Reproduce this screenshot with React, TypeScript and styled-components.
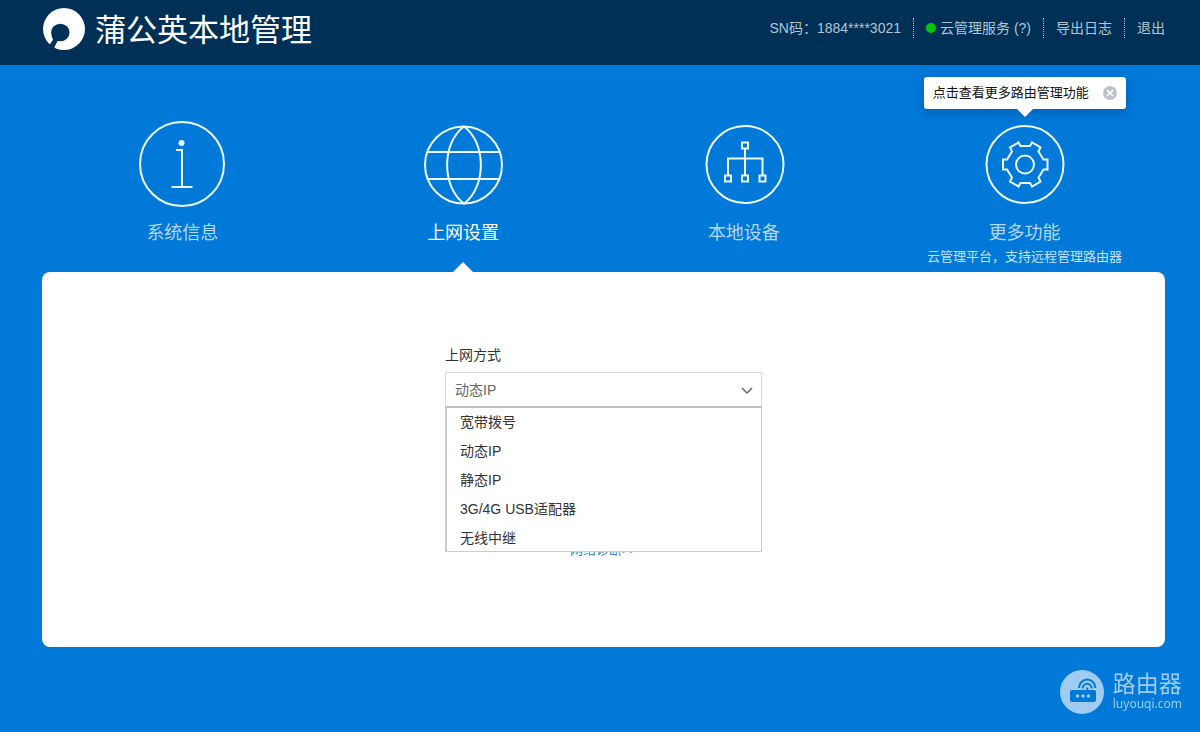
import React, { useState } from "react";
import styled, { createGlobalStyle, css } from "styled-components";

const GlobalStyle = createGlobalStyle`
  * { box-sizing: border-box; }
  body {
    margin: 0;
    background: #0079d9;
    font-family: "Liberation Sans", "Noto Sans CJK SC", sans-serif;
    font-size: 14px;
    line-height: 20px;
    color: #333;
  }
  button, select { font: inherit; }
`;

const Page = styled.div`
  min-height: 100vh;
  padding-bottom: 85px;
`;

const Header = styled.header`
  display: flex;
  align-items: center;
  justify-content: space-between;
  height: 65px;
  padding: 0 35px 0 42px;
  background: #003056;
  color: #b3c5d4;
`;

const Brand = styled.div`
  display: flex;
  align-items: center;
  gap: 9px;
  padding-bottom: 7px;
`;

const Title = styled.h1`
  margin: 0;
  padding-bottom: 2px;
  font-family: "Noto Sans CJK SC", sans-serif;
  font-size: 31px;
  line-height: 42px;
  font-weight: 400;
  color: #fff;
`;

const Tools = styled.ul`
  display: flex;
  margin: 0;
  padding: 0 0 9px;
  list-style: none;
`;

const Tool = styled.li`
  display: flex;
  align-items: center;
  & + & {
    margin-left: 12px;
    padding-left: 12px;
    border-left: 1px dotted #b3c5d4;
  }
`;

const StatusDot = styled.span`
  width: 10px;
  height: 10px;
  margin-right: 4px;
  border-radius: 50%;
  background: #00c80a;
`;

const ToolLink = styled.a`
  color: inherit;
  text-decoration: none;
`;

const Main = styled.main`
  padding: 0 35px 0 42px;
`;

const Nav = styled.nav`
  display: grid;
  grid-template-columns: repeat(4, 1fr);
  padding-top: 56px;
`;

const NavItem = styled.div`
  position: relative;
  display: flex;
  flex-direction: column;
  align-items: center;
  height: 151px;
`;

const NavLink = styled.a<{ $active?: boolean }>`
  display: flex;
  flex-direction: column;
  align-items: center;
  gap: 13px;
  font-size: 18px;
  line-height: 26px;
  text-decoration: none;
  color: ${(p) => (p.$active ? "#fff" : "#b3d7f4")};
  ${(p) =>
    p.$active &&
    css`
      &::after {
        content: "";
        position: absolute;
        bottom: 0;
        border: 10px solid transparent;
        border-top: 0;
        border-bottom-color: #fff;
      }
    `}
`;

const NavIcon = styled.svg`
  display: block;
  width: 86px;
  height: 86px;
  fill: none;
  stroke: #eefbff;
  stroke-width: 2;
`;

const Caption = styled.span`
  margin-top: 1px;
  font-size: 13px;
  line-height: 20px;
  white-space: nowrap;
  color: #c4e0f7;
`;

const Tip = styled.div`
  position: absolute;
  bottom: 163px;
  display: flex;
  align-items: center;
  justify-content: space-between;
  width: 202px;
  height: 32px;
  padding: 0 9px;
  border-radius: 3px;
  background: #fff;
  box-shadow: 0 3px 12px rgba(0, 30, 80, 0.3);
  color: #111;
  font-size: 13px;
  white-space: nowrap;
  &::after {
    content: "";
    position: absolute;
    top: 100%;
    left: 50%;
    margin-left: -8px;
    border: 8px solid transparent;
    border-bottom: 0;
    border-top-color: #fff;
  }
`;

const CloseButton = styled.button`
  display: flex;
  padding: 0;
  border: 0;
  background: none;
  cursor: pointer;
`;

const Panel = styled.section`
  display: flex;
  justify-content: center;
  min-height: 375px;
  padding: 73px 20px 20px;
  border-radius: 8px;
  background: #fff;
`;

const Form = styled.form`
  display: flex;
  flex-direction: column;
  width: 317px;
`;

const Label = styled.label`
  margin-bottom: 7px;
`;

const Dropdown = styled.div`
  position: relative;
  margin-bottom: 133px;
  svg {
    position: absolute;
    top: 15px;
    right: 9px;
    pointer-events: none;
  }
`;

const Select = styled.select`
  display: block;
  width: 100%;
  height: 35px;
  padding: 0 30px 0 9px;
  appearance: none;
  border: 1px solid #d9dcdd;
  border-radius: 0;
  background: #fff;
  color: #666;
  outline: none;
`;

const Options = styled.ul`
  position: absolute;
  top: 34px;
  left: 0;
  right: 0;
  margin: 0;
  padding: 0;
  list-style: none;
  border: 1px solid #c9cdce;
  border-width: 2px 1px 1px 2px;
  border-top-color: #bcc1c2;
  background: #fff;
`;

const Option = styled.li`
  height: 29px;
  padding-left: 13px;
  line-height: 29px;
  cursor: pointer;
  &:last-child {
    height: 27px;
  }
`;

const Diagnose = styled.a`
  align-self: center;
  font-size: 13px;
  color: #2a7fc5;
  text-decoration: none;
`;

const Watermark = styled.aside`
  position: fixed;
  right: 18px;
  bottom: 18px;
  display: flex;
  align-items: center;
  gap: 9px;
  color: #a0ccf1;
`;

const WatermarkText = styled.div`
  display: flex;
  flex-direction: column;
  padding-bottom: 2px;
`;

const WatermarkName = styled.span`
  font-size: 23px;
  line-height: 26px;
`;

const WatermarkSite = styled.span`
  font-family: "Noto Sans", sans-serif;
  font-size: 12px;
  line-height: 14px;
`;

const Logo = () => (
  <svg width="44" height="44" viewBox="0 0 44 44" aria-hidden="true">
    <circle cx="22" cy="22" r="21" fill="#fff" />
    <g fill="#003056">
      <ellipse cx="18.300" cy="25.500" rx="9.200" ry="8.700" />
      <path d="M9.500 28L11 33L5 41L12 44L12.500 40L15.500 34L22 32Z" />
    </g>
  </svg>
);

const InfoIcon = () => (
  <NavIcon viewBox="0 0 86 86" aria-hidden="true">
    <circle cx="43" cy="43" r="42" />
    <circle cx="42.500" cy="22" r="3" fill="#eefbff" stroke="none" />
    <path d="M37 29H43V66M32.500 66H53.500" />
  </NavIcon>
);

const GlobeIcon = () => (
  <NavIcon viewBox="0 0 86 86" aria-hidden="true">
    <circle cx="43.500" cy="44" r="38.500" />
    <path d="M44 5.500C21.500 22 21.500 66 44 82.500C66.500 66 66.500 22 44 5.500ZM7.500 31H80M7.500 58H80" />
  </NavIcon>
);

const DevicesIcon = () => (
  <NavIcon viewBox="0 0 86 86" aria-hidden="true">
    <circle cx="44" cy="43.500" r="38.500" />
    <path d="M41 21.500H47V27.500H41ZM44 27.500V54M27 54V37.500H61.500V54" />
    <path d="M24 54.500H30V60.500H24ZM41 54.500H47V60.500H41ZM58.500 54.500H64.500V60.500H58.500Z" />
  </NavIcon>
);

const GearIcon = () => (
  <NavIcon viewBox="0 0 86 86" aria-hidden="true">
    <circle cx="43" cy="43.500" r="38.500" />
    <circle cx="43" cy="43.500" r="9" />
    <path d="M38.500 25H48L50 21.500L58.500 26.500L56.500 30.500L61.500 38.500H65.500V48.500H61.500L56.500 56.500L58.500 60.500L50 65.500L48 62H38.500L36.500 65.500L28 60.500L30 56.500L25 48.500H21V38.500H25L30 30.500L28 26.500L36.500 21.500Z" />
  </NavIcon>
);

const RouterIcon = () => (
  <svg width="44" height="44" viewBox="0 0 44 44" aria-hidden="true">
    <circle cx="22" cy="22" r="22" fill="#a0ccf1" />
    <rect x="10" y="20" width="26" height="12" rx="2" fill="#0079d9" />
    <g fill="none" stroke="#0079d9" strokeWidth="2">
      <path d="M19 18a8.200 8.500 0 0 1 16.400 0" />
      <path d="M22.700 18.500a4.500 4.700 0 0 1 9 0" />
      <path d="M27.200 17.500V21" />
    </g>
    <g fill="#a0ccf1">
      <circle cx="17.500" cy="26" r="1.700" />
      <circle cx="23" cy="26" r="1.700" />
      <circle cx="28.500" cy="26" r="1.700" />
    </g>
  </svg>
);

const modes = ["宽带拨号", "动态IP", "静态IP", "3G/4G USB适配器", "无线中继"];

export default function App() {
  const [mode, setMode] = useState("动态IP");
  const [open, setOpen] = useState(true);
  const [tip, setTip] = useState(true);

  return (
    <Page>
      <GlobalStyle />
      <Header>
        <Brand>
          <Logo />
          <Title>蒲公英本地管理</Title>
        </Brand>
        <Tools>
          <Tool>SN码：1884****3021</Tool>
          <Tool>
            <StatusDot />
            <ToolLink href="#cloud">云管理服务 (?)</ToolLink>
          </Tool>
          <Tool>
            <ToolLink href="#log">导出日志</ToolLink>
          </Tool>
          <Tool>
            <ToolLink href="#logout">退出</ToolLink>
          </Tool>
        </Tools>
      </Header>
      <Main>
        <Nav>
          <NavItem>
            <NavLink href="#info">
              <InfoIcon />
              系统信息
            </NavLink>
          </NavItem>
          <NavItem>
            <NavLink href="#network" $active aria-current="page">
              <GlobeIcon />
              上网设置
            </NavLink>
          </NavItem>
          <NavItem>
            <NavLink href="#devices">
              <DevicesIcon />
              本地设备
            </NavLink>
          </NavItem>
          <NavItem>
            <NavLink href="#more">
              <GearIcon />
              更多功能
            </NavLink>
            <Caption>云管理平台，支持远程管理路由器</Caption>
            {tip && (
              <Tip>
                点击查看更多路由管理功能
                <CloseButton type="button" aria-label="关闭" onClick={() => setTip(false)}>
                  <svg width="14" height="14" viewBox="0 0 14 14" aria-hidden="true">
                    <circle cx="7" cy="7" r="7" fill="#bfc3c9" />
                    <path d="M4 4L10 10M10 4L4 10" stroke="#fff" strokeWidth="1.500" />
                  </svg>
                </CloseButton>
              </Tip>
            )}
          </NavItem>
        </Nav>
        <Panel>
          <Form>
            <Label htmlFor="mode">上网方式</Label>
            <Dropdown>
              <Select
                id="mode"
                value={mode}
                onChange={(e) => setMode(e.target.value)}
                onMouseDown={(e) => {
                  e.preventDefault();
                  setOpen(!open);
                }}
              >
                {modes.map((m) => (
                  <option key={m}>{m}</option>
                ))}
              </Select>
              <svg width="12" height="8" viewBox="0 0 12 8" aria-hidden="true">
                <path d="M1 1L6 6L11 1" fill="none" stroke="#666" strokeWidth="1.500" />
              </svg>
              {open && (
                <Options role="listbox" aria-label="上网方式">
                  {modes.map((m) => (
                    <Option
                      key={m}
                      role="option"
                      aria-selected={m === mode}
                      onClick={() => {
                        setMode(m);
                        setOpen(false);
                      }}
                    >
                      {m}
                    </Option>
                  ))}
                </Options>
              )}
            </Dropdown>
            <Diagnose href="#diagnose">网络诊断&gt;&gt;</Diagnose>
          </Form>
        </Panel>
      </Main>
      <Watermark>
        <RouterIcon />
        <WatermarkText>
          <WatermarkName>路由器</WatermarkName>
          <WatermarkSite>luyouqi.com</WatermarkSite>
        </WatermarkText>
      </Watermark>
    </Page>
  );
}
